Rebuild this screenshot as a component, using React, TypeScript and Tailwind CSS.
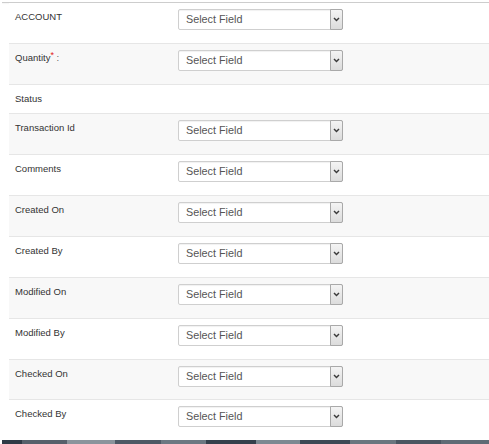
import React from "react";

type Row = { label: React.ReactNode; select: boolean; gray: boolean; pb: string };

function SelectBox() {
  return (
    <div className="flex h-[21px] w-[165px] items-stretch rounded-[2px] border border-[#cfcfcf] bg-white shadow-[inset_0_1px_1px_rgba(0,0,0,0.06)]">
      <div className="flex flex-1 items-center pl-[7px] text-[10.8px] leading-none text-[#555]">Select Field</div>
      <div className="-my-px -mr-px flex w-[13px] items-center justify-center rounded-r-[2px] border border-[#a9a9a9] bg-gradient-to-b from-[#f4f4f4] to-[#dcdcdc]">
        <svg width="7" height="5" viewBox="0 0 7 5">
          <polyline points="1,1 3.5,3.6 6,1" fill="none" stroke="#3a3a3a" strokeWidth="1.4" />
        </svg>
      </div>
    </div>
  );
}

export default function App() {
  const rows: Row[] = [
    { label: "ACCOUNT", select: true, gray: false, pb: "pb-[8px]" },
    {
      label: (
        <>
          Quantity<span className="relative -top-[3px] text-[9px] text-[#e02020]">*</span>
          <span className="text-[#666]"> :</span>
        </>
      ),
      select: true,
      gray: true,
      pb: "pb-[8px]",
    },
    { label: "Status", select: false, gray: false, pb: "pb-[7px]" },
    { label: "Transaction Id", select: true, gray: true, pb: "pb-[8px]" },
    { label: "Comments", select: true, gray: false, pb: "pb-[8px]" },
    { label: "Created On", select: true, gray: true, pb: "pb-[8px]" },
    { label: "Created By", select: true, gray: false, pb: "pb-[8px]" },
    { label: "Modified On", select: true, gray: true, pb: "pb-[8px]" },
    { label: "Modified By", select: true, gray: false, pb: "pb-[8px]" },
    { label: "Checked On", select: true, gray: true, pb: "pb-[7px]" },
    { label: "Checked By", select: true, gray: false, pb: "pb-[8px]" },
  ];

  return (
    <div
      className="relative h-[444px] w-[489px] overflow-hidden bg-white"
      style={{ fontFamily: '"Liberation Sans", Arial, sans-serif' }}
    >
      <div className="pt-[2px]">
        <div className="ml-[2px] border-t border-[#cdcdcd] shadow-[0_1px_1px_rgba(0,0,0,0.04)]" />
        {rows.map((r, i) => (
          <div
            key={i}
            className={`ml-[9px] flex items-start pl-[6px] pt-[6px] ${r.pb} ${
              i > 0 ? "border-t border-[#e6e6e6]" : ""
            } ${r.gray ? "bg-[#f8f8f8]" : "bg-white"}`}
          >
            <div className="w-[163px] pt-[1px] text-[9.5px] leading-[14px] text-[#333]">{r.label}</div>
            {r.select && (
              <div className="mb-[5px]">
                <SelectBox />
              </div>
            )}
          </div>
        ))}
      </div>
      <div className="absolute bottom-0 left-[2px] right-0 flex h-[4px]">
        <div className="w-[20px] bg-[#2f3a46]" />
        <div className="w-[45px] bg-[#56606b]" />
        <div className="w-[48px] bg-[#8a949c]" />
        <div className="w-[46px] bg-[#4d5965]" />
        <div className="w-[45px] bg-[#6c7882]" />
        <div className="w-[50px] bg-[#35404c]" />
        <div className="w-[44px] bg-[#7d8992]" />
        <div className="w-[50px] bg-[#3d4955]" />
        <div className="w-[46px] bg-[#6a767f]" />
        <div className="w-[45px] bg-[#4a5661]" />
        <div className="flex-1 bg-[#5f6b75]" />
      </div>
    </div>
  );
}
